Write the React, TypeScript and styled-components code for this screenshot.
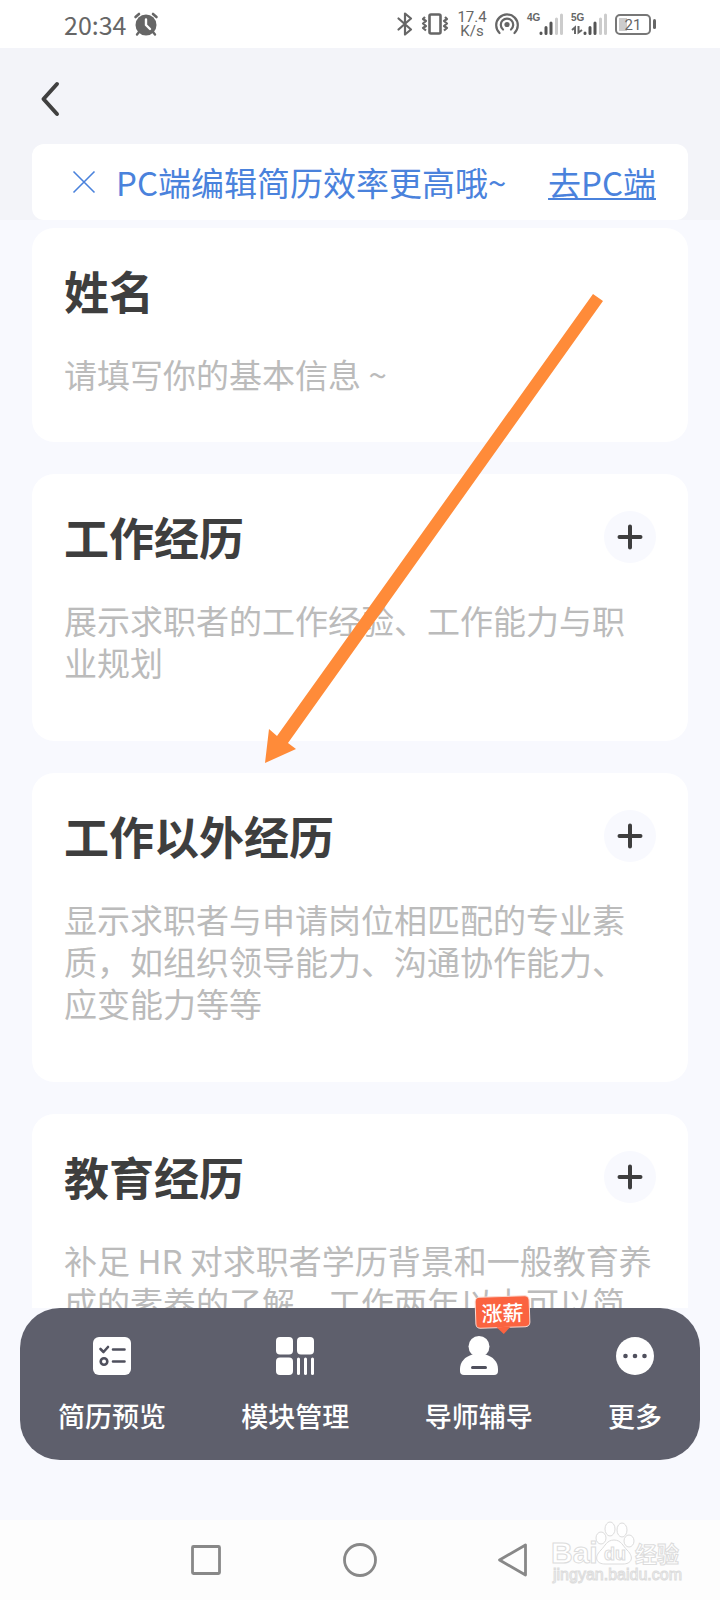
import React from "react";
import styled, { createGlobalStyle } from "styled-components";

const GlobalStyle = createGlobalStyle`
  *, *::before, *::after { box-sizing: border-box; }
  body {
    margin: 0;
    background: #f8f9fe;
    font-family: "Noto Sans CJK SC", sans-serif;
  }
  h2, p { margin: 0; }
  button {
    padding: 0;
    border: 0;
    background: none;
    color: inherit;
    font: inherit;
    cursor: pointer;
  }
  svg { display: block; flex: none; overflow: visible; }
`;

const Page = styled.div`
  position: relative;
  display: flex;
  flex-direction: column;
  height: 100vh;
  overflow: hidden;
`;

/* ---------- status bar ---------- */

const StatusBar = styled.div`
  flex: none;
  display: flex;
  align-items: center;
  justify-content: space-between;
  height: 48px;
  padding: 0 64px;
  background: #fff;
  color: #666;
`;

const StatusGroup = styled.div<{ $gap: number }>`
  display: flex;
  align-items: center;
  gap: ${(p) => p.$gap}px;
`;

const Clock = styled.span`
  font-size: 25px;
  line-height: 48px;
`;

const Speed = styled.span`
  width: 30px;
  font-family: Roboto, sans-serif;
  font-size: 15px;
  line-height: 14px;
  text-align: center;
`;

const SignalBox = styled.div`
  display: flex;
  align-items: flex-start;
  height: 24px;
`;

const SignalLabel = styled.div`
  display: flex;
  flex-direction: column;
  gap: 2px;
  width: 12px;
  font-family: "Liberation Sans", sans-serif;
  font-size: 10px;
  font-weight: 700;
  line-height: 12px;
`;

const Battery = styled.div`
  display: flex;
  align-items: center;
  gap: 2px;
  &::after {
    content: "";
    width: 3px;
    height: 10px;
    border-radius: 2px;
    background: #666;
  }
`;

const BatteryCell = styled.div`
  width: 36px;
  height: 21px;
  border: 2px solid #777;
  border-radius: 5px;
  background: linear-gradient(90deg, #ccc 8px, transparent 8px) 2px 2px / 30px 13px no-repeat;
  font-family: Roboto, sans-serif;
  font-size: 15px;
  line-height: 18px;
  text-align: center;
`;

/* ---------- header ---------- */

const Header = styled.header`
  flex: none;
  padding: 0 32px;
  background: #f3f4f9;
`;

const TitleRow = styled.div`
  display: flex;
  align-items: center;
  height: 96px;
  padding-top: 6px;
`;

const Banner = styled.div`
  display: flex;
  align-items: center;
  height: 76px;
  padding: 0 32px 0 40px;
  gap: 20px;
  border-radius: 12px;
  background: #fff;
  color: #4a82dc;
  font-size: 33px;
  line-height: 48px;
`;

const BannerText = styled.p`
  flex: 1;
  white-space: nowrap;
`;

const BannerLink = styled.a`
  color: inherit;
  white-space: nowrap;
  text-decoration-thickness: 2px;
  text-underline-offset: 2px;
`;

/* ---------- sections ---------- */

const Sections = styled.main`
  flex: 1;
  min-height: 0;
  display: flex;
  flex-direction: column;
  gap: 32px;
  padding: 8px 32px 0;
  overflow-y: auto;
  scrollbar-width: none;
`;

const Card = styled.section<{ $compact?: boolean }>`
  flex: none;
  padding: 37px 32px ${(p) => (p.$compact ? 47 : 58)}px;
  border-radius: 22px;
  background: #fff;
`;

const CardHead = styled.div`
  display: flex;
  align-items: center;
  justify-content: space-between;
  height: 52px;
`;

const CardTitle = styled.h2`
  color: #3e3e3e;
  font-size: 45px;
  font-weight: 700;
  line-height: 52px;
`;

const CardText = styled.p`
  margin-top: 36px;
  color: #bbb;
  font-size: 33px;
  line-height: 42px;
`;

const AddButton = styled.button`
  display: flex;
  align-items: center;
  justify-content: center;
  width: 52px;
  height: 52px;
  border-radius: 50%;
  background: #f8f9fe;
`;

/* ---------- bottom toolbar ---------- */

const Toolbar = styled.nav`
  flex: none;
  display: flex;
  justify-content: space-between;
  margin: 0 20px 60px;
  padding: 29px 38px 26px;
  border-radius: 40px;
  background: #5e5f6c;
  color: #fff;
`;

const Tool = styled.button`
  position: relative;
  display: flex;
  flex-direction: column;
  align-items: center;
  gap: 23px;
  font-size: 27px;
  font-weight: 500;
  line-height: 36px;
`;

const Tag = styled.span`
  position: absolute;
  left: 50px;
  top: -41px;
  width: 55px;
  height: 32px;
  border: 1px solid #fbd9d0;
  border-radius: 5px;
  background: #fb6340;
  font-size: 21px;
  line-height: 30px;
  text-align: center;
  transform: rotate(-2deg);
  &::after {
    content: "";
    position: absolute;
    left: 20px;
    top: 30px;
    border: 7px solid transparent;
    border-top-color: #fb6340;
    border-bottom: 0;
  }
`;

/* ---------- system navigation ---------- */

const SystemNav = styled.nav`
  flex: none;
  position: relative;
  display: flex;
  align-items: center;
  justify-content: center;
  gap: 120px;
  height: 80px;
  background: #fdfdfd;
`;

const Watermark = styled.svg`
  position: absolute;
  right: 36px;
  top: 0;
`;

const Arrow = styled.svg`
  position: absolute;
  left: 264px;
  top: 293px;
  pointer-events: none;
`;

/* ---------- icons ---------- */

const AlarmIcon = () => (
  <svg width="24" height="24" viewBox="0 0 24 24" fill="none">
    <circle cx="12" cy="13" r="10.5" fill="#666" />
    <path d="M1.5 5 5 2M22.500 5 19 2" stroke="#666" strokeWidth="2.600" strokeLinecap="round" />
    <path d="M5 20 3 22.500M19 20l2 2.500" stroke="#666" strokeWidth="2.400" strokeLinecap="round" />
    <path d="M12 7.500V13l4 4" stroke="#fff" strokeWidth="2.400" strokeLinecap="round" strokeLinejoin="round" />
  </svg>
);

const BluetoothIcon = () => (
  <svg width="16" height="24" viewBox="0 0 16 24" fill="none" stroke="#666" strokeWidth="2.200" strokeLinejoin="round" strokeLinecap="round">
    <path d="M1.500 6.500 14 17.500 8 22.500V1.500L14 6.500 1.500 17.500" />
  </svg>
);

const VibrateIcon = () => (
  <svg width="28" height="24" viewBox="0 0 28 24" fill="none" stroke="#666">
    <rect x="8.500" y="2.500" width="11" height="19" rx="1.500" strokeWidth="2.600" />
    <path d="m4 5-2 2 3 2-3 2.500 3 2.500-3 2 3 2.500M24 5l2 2-3 2 3 2.500-3 2.500 3 2-3 2.500" strokeWidth="2.200" strokeLinejoin="round" />
  </svg>
);

const HotspotIcon = () => (
  <svg width="24" height="24" viewBox="0 0 24 24" fill="none" stroke="#666" strokeWidth="2.200" strokeLinecap="round">
    <circle cx="12" cy="12.500" r="2.600" fill="#666" stroke="none" />
    <path d="M8 17.500a6.200 6.200 0 1 1 8 0" />
    <path d="M4.500 21a10.800 10.800 0 1 1 15 0" />
  </svg>
);

const SignalBars = () => (
  <svg width="24" height="24" viewBox="0 0 24 24" fill="none" strokeWidth="3" strokeLinecap="round">
    <path d="M2 21.500v-.5M7 21.500v-6M12 21.500V11" stroke="#555" />
    <path d="M17.500 21.500V7M22.500 21.500V3" stroke="#ccc" />
  </svg>
);

const DataArrows = () => (
  <svg width="12" height="8" viewBox="0 0 12 8" fill="none" stroke="#666" strokeWidth="2">
    <path d="M1 4 4 1.500V8M7.500 0v6.500L11 4" />
  </svg>
);

const BackIcon = () => (
  <svg width="36" height="40" viewBox="0 0 36 40" fill="none">
    <path d="M25 5 11.500 20 25 35" stroke="#404040" strokeWidth="4" strokeLinecap="round" strokeLinejoin="round" />
  </svg>
);

const CloseIcon = () => (
  <svg width="24" height="24" viewBox="0 0 24 24" fill="none">
    <path d="m1.500 1.500 21 21M22.500 1.500l-21 21" stroke="#4a82dc" strokeWidth="1.600" />
  </svg>
);

const PlusIcon = () => (
  <svg width="26" height="26" viewBox="0 0 26 26" fill="none">
    <path d="M13 2.500v21M2.500 13h21" stroke="#3e3e3e" strokeWidth="4" strokeLinecap="round" />
  </svg>
);

const PreviewIcon = () => (
  <svg width="38" height="38" viewBox="0 0 38 38" fill="none">
    <rect width="38" height="38" rx="6" fill="#fff" />
    <g stroke="#4f505d" strokeWidth="2.600" strokeLinecap="round" strokeLinejoin="round">
      <path d="m7.500 12 3 3L15 10M20 12.500h11.500M20 24.500h11.500" />
      <circle cx="11" cy="24.500" r="3.300" />
    </g>
  </svg>
);

const ModulesIcon = () => (
  <svg width="38" height="38" viewBox="0 0 38 38" fill="#fff">
    <rect width="17" height="17.500" rx="4" />
    <rect x="21" width="17" height="17.500" rx="4" />
    <rect y="20.500" width="17" height="17.500" rx="4" />
    <rect x="21" y="20.500" width="3" height="17.500" rx="1.500" />
    <rect x="28" y="20.500" width="3" height="17.500" rx="1.500" />
    <rect x="35" y="20.500" width="3" height="17.500" rx="1.500" />
  </svg>
);

const MentorIcon = () => (
  <svg width="38" height="38" viewBox="0 0 38 38" fill="none">
    <circle cx="19" cy="9.500" r="10.500" fill="#fff" />
    <path d="M12.500 17.500h13C33 19.500 38 25 38 32v2q0 4-4 4H4q-4 0-4-4v-2c0-7 5-12.500 12.500-14.500Z" fill="#fff" />
    <path d="M12.500 30.500h13" stroke="#4f505d" strokeWidth="3" strokeLinecap="round" />
  </svg>
);

const MoreIcon = () => (
  <svg width="38" height="38" viewBox="0 0 38 38" fill="#4f505d">
    <circle cx="19" cy="19" r="19" fill="#fff" />
    <circle cx="9.500" cy="19" r="2.300" />
    <circle cx="19" cy="19" r="2.300" />
    <circle cx="28.500" cy="19" r="2.300" />
  </svg>
);

const SystemIcon = ({ children }: { children: React.ReactNode }) => (
  <svg width="34" height="34" viewBox="0 0 34 34" fill="none" stroke="#888" strokeWidth="2.800" strokeLinejoin="round">
    {children}
  </svg>
);

/* ---------- data ---------- */

const sections = [
  { title: "姓名", text: "请填写你的基本信息 ~", compact: true },
  { title: "工作经历", text: "展示求职者的工作经验、工作能力与职业规划" },
  { title: "工作以外经历", text: "显示求职者与申请岗位相匹配的专业素质，如组织领导能力、沟通协作能力、应变能力等等" },
  { title: "教育经历", text: "补足 HR 对求职者学历背景和一般教育养成的素养的了解，工作两年以上可以简" },
];

const tools = [
  { label: "简历预览", icon: <PreviewIcon /> },
  { label: "模块管理", icon: <ModulesIcon /> },
  { label: "导师辅导", icon: <MentorIcon />, tag: "涨薪" },
  { label: "更多", icon: <MoreIcon /> },
];

export default function App() {
  return (
    <Page>
      <GlobalStyle />
      <StatusBar>
        <StatusGroup $gap={8}>
          <Clock>20:34</Clock>
          <AlarmIcon />
        </StatusGroup>
        <StatusGroup $gap={8}>
          <BluetoothIcon />
          <VibrateIcon />
          <Speed>17.4 K/s</Speed>
          <HotspotIcon />
          <SignalBox>
            <SignalLabel>4G</SignalLabel>
            <SignalBars />
          </SignalBox>
          <SignalBox>
            <SignalLabel>
              5G
              <DataArrows />
            </SignalLabel>
            <SignalBars />
          </SignalBox>
          <Battery>
            <BatteryCell>21</BatteryCell>
          </Battery>
        </StatusGroup>
      </StatusBar>

      <Header>
        <TitleRow>
          <button aria-label="返回">
            <BackIcon />
          </button>
        </TitleRow>
        <Banner>
          <button aria-label="关闭">
            <CloseIcon />
          </button>
          <BannerText>PC端编辑简历效率更高哦~</BannerText>
          <BannerLink href="#pc">去PC端</BannerLink>
        </Banner>
      </Header>

      <Sections>
        {sections.map((s) => (
          <Card key={s.title} $compact={s.compact}>
            <CardHead>
              <CardTitle>{s.title}</CardTitle>
              {!s.compact && (
                <AddButton aria-label={`添加${s.title}`}>
                  <PlusIcon />
                </AddButton>
              )}
            </CardHead>
            <CardText>{s.text}</CardText>
          </Card>
        ))}
      </Sections>

      <Toolbar>
        {tools.map((t) => (
          <Tool key={t.label}>
            {t.icon}
            {t.label}
            {t.tag && <Tag>{t.tag}</Tag>}
          </Tool>
        ))}
      </Toolbar>

      <SystemNav>
        <button aria-label="最近任务">
          <SystemIcon>
            <rect x="3.500" y="3.500" width="27" height="27" rx="1" />
          </SystemIcon>
        </button>
        <button aria-label="主屏幕">
          <SystemIcon>
            <circle cx="17" cy="17" r="15.500" />
          </SystemIcon>
        </button>
        <button aria-label="返回上一级">
          <SystemIcon>
            <path d="M28.500 2v30L2.500 17Z" />
          </SystemIcon>
        </button>
        <Watermark width="134" height="72" viewBox="0 0 134 72" fill="#fff" stroke="#dcdcdc" strokeWidth="1" fontFamily="Liberation Sans, sans-serif">
          <text x="1" y="43" fontSize="30" fontWeight="700">Bai</text>
          <ellipse cx="60" cy="9" rx="5" ry="7" />
          <ellipse cx="72" cy="10" rx="5" ry="7" />
          <ellipse cx="51" cy="18" rx="5" ry="6" />
          <ellipse cx="79" cy="21" rx="5" ry="6" />
          <path d="M64 20c7 0 9 6 13 10 8 8 4 14-4 14H55c-8 0-12-6-4-14 4-4 6-10 13-10Z" />
          <text x="54" y="40" fontSize="18" fontWeight="700">du</text>
          <text x="85" y="42" fontSize="22" fontWeight="700" fontFamily="Noto Sans CJK SC, sans-serif">经验</text>
          <text x="3" y="60" fontSize="16">jingyan.baidu.com</text>
        </Watermark>
      </SystemNav>

      <Arrow width="342" height="472" viewBox="264 293 342 472">
        <path d="M265 763 269 729 277 736 593 294 603 301 288 743 296 749Z" fill="#ff8b39" />
      </Arrow>
    </Page>
  );
}
